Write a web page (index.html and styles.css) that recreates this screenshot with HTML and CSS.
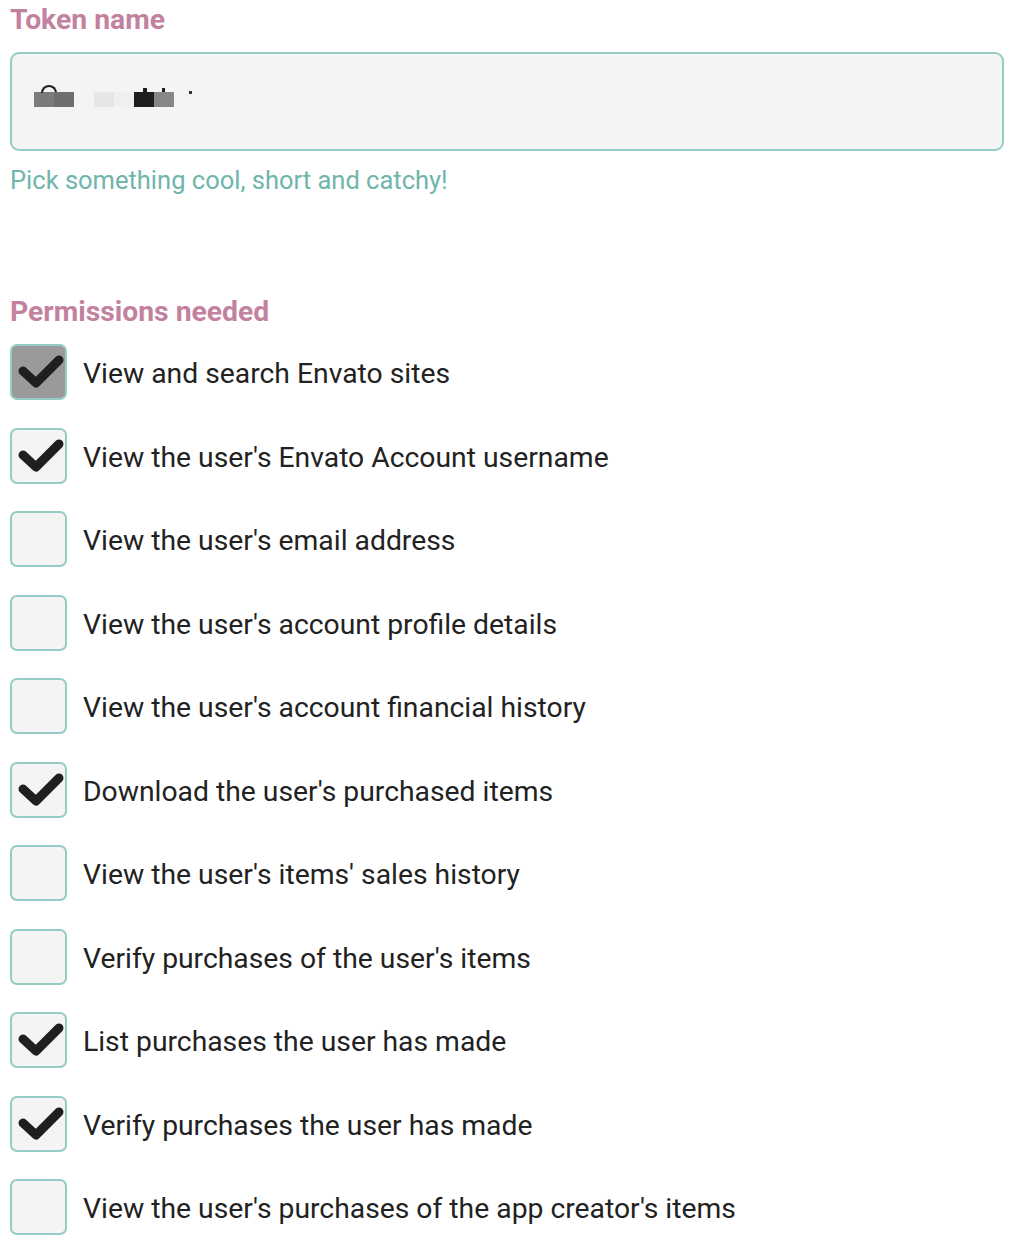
FILE: index.html
```html
<!DOCTYPE html>
<html>
<head>
<meta charset="utf-8">
<link rel="stylesheet" href="styles.css">
</head>
<body>
<div class="page">
  <div class="field">
    <div class="label">Token name</div>
    <div class="input">
      <div class="redacted">
        <span class="blk b1"><span class="arc"></span></span><span class="blk b2"></span>
        <span class="blk b3 sp"></span><span class="blk b4"></span>
        <span class="blk b5"><span class="peak p1"></span><span class="peak p2"></span></span><span class="blk b6"></span>
        <span class="tick"></span>
      </div>
    </div>
    <div class="hint">Pick something cool, short and catchy!</div>
  </div>

  <div class="perms">
    <div class="label">Permissions needed</div>
    <ul class="list">
      <li class="row"><span class="box disabled"><svg viewBox="0 0 56 56"><polyline points="12,27 25,39 48,16"/></svg></span><span class="text">View and search Envato sites</span></li>
      <li class="row"><span class="box"><svg viewBox="0 0 56 56"><polyline points="12,27 25,39 48,16"/></svg></span><span class="text">View the user's Envato Account username</span></li>
      <li class="row"><span class="box"></span><span class="text">View the user's email address</span></li>
      <li class="row"><span class="box"></span><span class="text">View the user's account profile details</span></li>
      <li class="row"><span class="box"></span><span class="text">View the user's account financial history</span></li>
      <li class="row"><span class="box"><svg viewBox="0 0 56 56"><polyline points="12,27 25,39 48,16"/></svg></span><span class="text">Download the user's purchased items</span></li>
      <li class="row"><span class="box"></span><span class="text">View the user's items' sales history</span></li>
      <li class="row"><span class="box"></span><span class="text">Verify purchases of the user's items</span></li>
      <li class="row"><span class="box"><svg viewBox="0 0 56 56"><polyline points="12,27 25,39 48,16"/></svg></span><span class="text">List purchases the user has made</span></li>
      <li class="row"><span class="box"><svg viewBox="0 0 56 56"><polyline points="12,27 25,39 48,16"/></svg></span><span class="text">Verify purchases the user has made</span></li>
      <li class="row"><span class="box"></span><span class="text">View the user's purchases of the app creator's items</span></li>
    </ul>
  </div>
</div>
</body>
</html>
```

FILE: styles.css
```css
* { box-sizing: border-box; }
html, body { margin: 0; padding: 0; background: #ffffff; }
body { font-family: Roboto, "Noto Sans", sans-serif; color: #222222; }
.page { padding: 3px 12px 0 10px; width: 1016px; }
.label { font-size: 28.3px; font-weight: 700; color: #c2819e; line-height: 34px; }
.input {
  margin-top: 15px;
  height: 99px;
  border: 2px solid #95ccc6;
  border-radius: 9px;
  background: #f4f4f4;
  display: flex;
  align-items: flex-start;
  padding: 38px 0 0 22px;
}
.redacted { display: flex; align-items: flex-end; height: 15px; }
.blk { display: block; width: 20px; height: 15px; position: relative; }
.b1 { background: #7b7b7b; }
.b2 { background: #6e6e6e; }
.b3 { background: #e6e6e6; }
.b3.sp { margin-left: 20px; }
.b4 { background: #efefef; }
.b5 { background: #1e1e1e; }
.b6 { background: #878787; }
.arc { position: absolute; left: 7px; top: -7px; width: 16px; height: 8px; border: 2px solid #1e1e1e; border-bottom: none; border-radius: 8px 8px 0 0; }
.peak { position: absolute; top: -4px; width: 4px; height: 5px; background: #1e1e1e; }
.p1 { left: 9px; }
.p2 { left: 28px; width: 3px; }
.tick { display: block; width: 3px; height: 3px; background: #333; margin-left: 15px; margin-bottom: 13px; }
.hint { margin-top: 14px; font-size: 25.5px; color: #6fb5ab; line-height: 30px; }
.perms { margin-top: 100px; }
.list { list-style: none; margin: 15px 0 0 0; padding: 0; display: flex; flex-direction: column; gap: 27.5px; }
.row { display: flex; align-items: center; gap: 16px; height: 56px; }
.box {
  width: 57px; height: 56px; flex: none;
  border: 2px solid #95ccc6;
  border-radius: 7px;
  background: #f4f4f4;
  display: flex; align-items: center; justify-content: center;
}
.box.disabled { background: #9a9a9a; }
.box svg { width: 56px; height: 56px; display: block; margin: -2px; }
.box polyline { fill: none; stroke: #1f1f1f; stroke-width: 9; stroke-linecap: round; stroke-linejoin: round; }
.text { font-size: 28.3px; line-height: 34px; padding-top: 4px; color: #222222; }
```
